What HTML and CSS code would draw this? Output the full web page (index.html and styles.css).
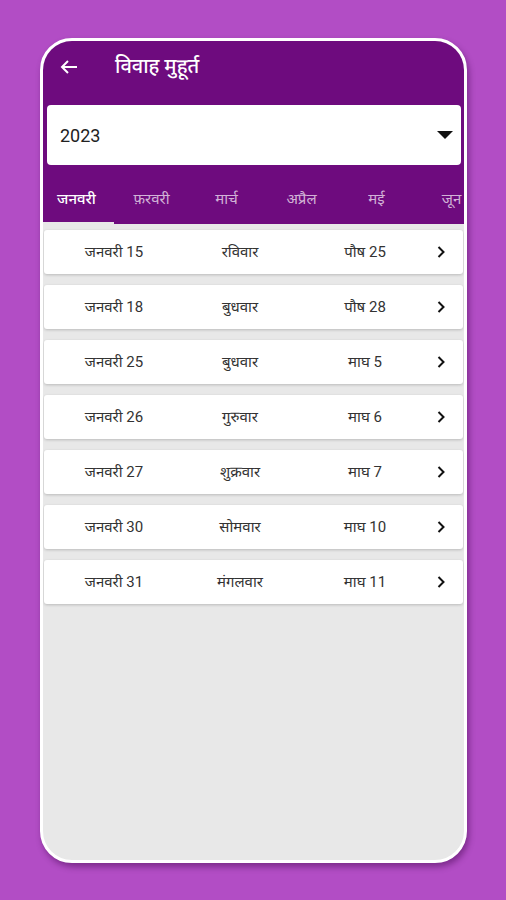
FILE: index.html
```html
<!DOCTYPE html>
<html>
<head>
    <meta charset="utf-8">
    <title>विवाह मुहूर्त</title>
    <link rel="stylesheet" href="styles.css">
</head>
<body>
    <div class="phone">
        <div class="appbar">
            <div class="toolbar">
                <svg class="back" width="18" height="14" viewBox="0 0 18 14">
                    <path d="M17 7H2M8 1L2 7l6 6" fill="none" stroke="#fff" stroke-width="2"/>
                </svg>
                <span class="title">विवाह मुहूर्त</span>
            </div>
            <div class="select">
                <span class="year">2023</span>
                <svg width="16" height="8" viewBox="0 0 16 8">
                    <path d="M0 0h16L8 8z" fill="#111"/>
                </svg>
            </div>
            <div class="tabs">
                <div class="tab active">जनवरी</div>
                <div class="tab">फ़रवरी</div>
                <div class="tab">मार्च</div>
                <div class="tab">अप्रैल</div>
                <div class="tab">मई</div>
                <div class="tab">जून</div>
            </div>
        </div>
        <div class="list">
            <div class="row"><span>जनवरी 15</span><span>रविवार</span><span>पौष 25</span><svg class="chev" width="8" height="12" viewBox="0 0 8 12"><path d="M1.5 1l5 5-5 5" fill="none" stroke="#111" stroke-width="2"/></svg></div>
            <div class="row"><span>जनवरी 18</span><span>बुधवार</span><span>पौष 28</span><svg class="chev" width="8" height="12" viewBox="0 0 8 12"><path d="M1.5 1l5 5-5 5" fill="none" stroke="#111" stroke-width="2"/></svg></div>
            <div class="row"><span>जनवरी 25</span><span>बुधवार</span><span>माघ 5</span><svg class="chev" width="8" height="12" viewBox="0 0 8 12"><path d="M1.5 1l5 5-5 5" fill="none" stroke="#111" stroke-width="2"/></svg></div>
            <div class="row"><span>जनवरी 26</span><span>गुरुवार</span><span>माघ 6</span><svg class="chev" width="8" height="12" viewBox="0 0 8 12"><path d="M1.5 1l5 5-5 5" fill="none" stroke="#111" stroke-width="2"/></svg></div>
            <div class="row"><span>जनवरी 27</span><span>शुक्रवार</span><span>माघ 7</span><svg class="chev" width="8" height="12" viewBox="0 0 8 12"><path d="M1.5 1l5 5-5 5" fill="none" stroke="#111" stroke-width="2"/></svg></div>
            <div class="row"><span>जनवरी 30</span><span>सोमवार</span><span>माघ 10</span><svg class="chev" width="8" height="12" viewBox="0 0 8 12"><path d="M1.5 1l5 5-5 5" fill="none" stroke="#111" stroke-width="2"/></svg></div>
            <div class="row"><span>जनवरी 31</span><span>मंगलवार</span><span>माघ 11</span><svg class="chev" width="8" height="12" viewBox="0 0 8 12"><path d="M1.5 1l5 5-5 5" fill="none" stroke="#111" stroke-width="2"/></svg></div>
        </div>
    </div>
</body>
</html>
```

FILE: styles.css
```css
body {
    margin: 0;
    background-color: #b24dc5;
    font-family: Roboto, "Noto Sans Devanagari", "Noto Sans", sans-serif;
    height: 900px;
    overflow: hidden;
}
.phone {
    margin: 38px 0 0 40px;
    width: 421px;
    height: 819px;
    border: 3px solid #fff;
    border-radius: 32px;
    background-color: #e8e8e8;
    overflow: hidden;
    box-shadow: 2px 4px 6px rgba(60, 0, 70, 0.45);
}
.appbar {
    background-color: #6e0b7e;
    height: 183px;
}
.toolbar {
    height: 52px;
    display: flex;
    align-items: center;
    color: #fff;
}
.back {
    margin-left: 17px;
}
.title {
    margin-left: 37px;
    font-size: 20px;
    font-weight: 500;
}
.select {
    margin: 12px 3px 0 4px;
    height: 60px;
    background-color: #fff;
    border-radius: 4px;
    display: flex;
    align-items: center;
    justify-content: space-between;
    padding: 0 8px 0 13px;
}
.year {
    font-size: 18px;
    color: #222;
}
.tabs {
    margin-top: 11px;
    margin-left: -4px;
    height: 48px;
    display: flex;
}
.tab {
    flex: 0 0 75px;
    display: flex;
    align-items: center;
    justify-content: center;
    font-size: 15px;
    color: rgba(255, 255, 255, 0.7);
    box-sizing: border-box;
}
.tab.active {
    color: #fff;
    font-weight: 500;
    border-bottom: 2px solid #e8e8e8;
    padding-top: 2px;
}
.list {
    padding: 6px 1px 0 1px;
}
.row {
    height: 44px;
    margin-bottom: 11px;
    padding-top: 2px;
    box-sizing: border-box;
    background-color: #fff;
    border-radius: 3px;
    box-shadow: 0 1px 3px rgba(0, 0, 0, 0.2);
    display: grid;
    grid-template-columns: 140px 112px 138px 1fr;
    align-items: center;
    font-size: 15px;
    color: #333;
    text-align: center;
}
.row .chev {
    margin-left: 3px;
    margin-top: -2px;
}
```
